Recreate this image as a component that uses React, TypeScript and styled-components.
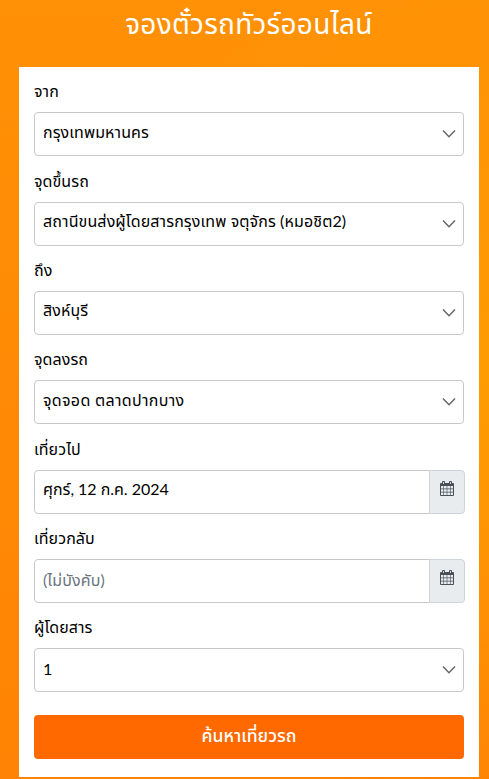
import React from 'react';
import styled, { createGlobalStyle } from 'styled-components';

const GlobalStyle = createGlobalStyle`
  * { box-sizing: border-box; }
  body {
    margin: 0;
    font-family: "Noto Sans Thai", "Noto Sans", sans-serif;
    color: #000;
  }
`;

const Page = styled.main`
  height: 779px;
  padding: 0 10px 0 19px;
  overflow: hidden;
  background:
    radial-gradient(ellipse 440px 430px at 100% 48%, #ff9c02, rgba(255, 156, 2, 0)),
    linear-gradient(180deg, #ff9106, #ff8a05 50%, #ff8304);
`;

const Title = styled.h1`
  height: 67px;
  margin: 0;
  padding-top: 3px;
  text-align: center;
  color: #fff;
  font-size: 28px;
  font-weight: 400;
  letter-spacing: 0.27px;
  line-height: 46px;
`;

const Card = styled.form`
  height: 710px;
  padding: 0.25px 15px 0;
  background: #fff;
`;

const Field = styled.div`
  height: 89.33px;
  padding-top: 12px;
`;

const Label = styled.label`
  display: block;
  height: 33px;
  padding-top: 1px;
  font-size: 16px;
  letter-spacing: 0.08px;
  line-height: 25px;
`;

const Control = styled.div<{ $attached?: boolean }>`
  display: flex;
  align-items: center;
  flex: 1;
  height: 44px;
  padding: 0 7px 0 8px;
  border: 1px solid #c8c8c8;
  border-radius: ${({ $attached }) => ($attached ? '4px 0 0 4px' : '4px')};
`;

const Value = styled.input<{ $tracking?: number }>`
  flex: 1;
  min-width: 0;
  height: 40px;
  padding: 0 0 3px;
  border: 0;
  outline: 0;
  background: transparent;
  color: #000;
  font-family: Lato, "Noto Sans Thai", "Noto Sans", sans-serif;
  font-size: 16px;
  letter-spacing: ${({ $tracking = 0.1 }) => $tracking}px;

  &::placeholder {
    color: #6c757d;
    opacity: 1;
  }
`;

const DateGroup = styled.div`
  display: flex;
  margin-right: -1px;
`;

const Addon = styled.span`
  display: flex;
  justify-content: center;
  width: 36px;
  height: 44px;
  padding-top: 10px;
  margin-left: -1px;
  border: 1px solid #ced4da;
  border-radius: 0 4px 4px 0;
  background: #e9ecef;
`;

const Submit = styled.button`
  display: block;
  width: 100%;
  height: 44px;
  margin-top: 22px;
  padding: 0 0 1px;
  border: 0;
  border-radius: 4px;
  background: #ff6900;
  color: #fff;
  font-family: inherit;
  font-size: 17.6px;
  font-weight: 500;
`;

const Chevron = () => (
  <svg width="14" height="10" viewBox="0 0 14 10" fill="none" stroke="#666" strokeWidth="1.5">
    <path d="M1 1.5 7 7.7 13 1.5" />
  </svg>
);

const Calendar = () => (
  <svg width="14" height="15" viewBox="0 0 14 15">
    <rect y="2" width="14" height="13" rx="1" fill="#495057" />
    <rect x="2" width="3" height="4" rx="1" fill="#495057" />
    <rect x="9" width="3" height="4" rx="1" fill="#495057" />
    <path fill="#d9d3cf" d="M3 1h1v2H3zM10 1h1v2h-1z" />
    <path
      fill="#e9ecef"
      d="M1 5h2.4v2.6H1zM4 5h2.7v2.6H4zM7.3 5H10v2.6H7.3zM10.6 5H13v2.6h-2.4zM1 8.2h2.4v2.6H1zM4 8.2h2.7v2.6H4zM7.3 8.2H10v2.6H7.3zM10.6 8.2H13v2.6h-2.4zM1 11.4h2.4V14H1zM4 11.4h2.7V14H4zM7.3 11.4H10V14H7.3zM10.6 11.4H13V14h-2.4z"
    />
  </svg>
);

type FieldData = {
  id: string;
  label: string;
  value: string;
  placeholder?: string;
  date?: boolean;
  tracking?: number;
};

const fields: FieldData[] = [
  { id: 'from', label: 'จาก', value: 'กรุงเทพมหานคร' },
  { id: 'pickup', label: 'จุดขึ้นรถ', value: 'สถานีขนส่งผู้โดยสารกรุงเทพ จตุจักร (หมอชิต2)', tracking: 0.12 },
  { id: 'to', label: 'ถึง', value: 'สิงห์บุรี' },
  { id: 'dropoff', label: 'จุดลงรถ', value: 'จุดจอด ตลาดปากบาง', tracking: 0.33 },
  { id: 'depart', label: 'เที่ยวไป', value: 'ศุกร์, 12 ก.ค. 2024', date: true, tracking: -0.02 },
  { id: 'return', label: 'เที่ยวกลับ', value: '', placeholder: '(ไม่บังคับ)', date: true },
  { id: 'passengers', label: 'ผู้โดยสาร', value: '1' },
];

export default function App() {
  return (
    <>
      <GlobalStyle />
      <Page>
        <Title>จองตั๋วรถทัวร์ออนไลน์</Title>
        <Card>
          {fields.map(({ id, label, value, placeholder, date, tracking }) => (
            <Field key={id}>
              <Label htmlFor={id}>{label}</Label>
              {date ? (
                <DateGroup>
                  <Control $attached>
                    <Value id={id} $tracking={tracking} defaultValue={value} placeholder={placeholder} readOnly />
                  </Control>
                  <Addon><Calendar /></Addon>
                </DateGroup>
              ) : (
                <Control>
                  <Value id={id} $tracking={tracking} defaultValue={value} readOnly />
                  <Chevron />
                </Control>
              )}
            </Field>
          ))}
          <Submit type="button">ค้นหาเที่ยวรถ</Submit>
        </Card>
      </Page>
    </>
  );
}
